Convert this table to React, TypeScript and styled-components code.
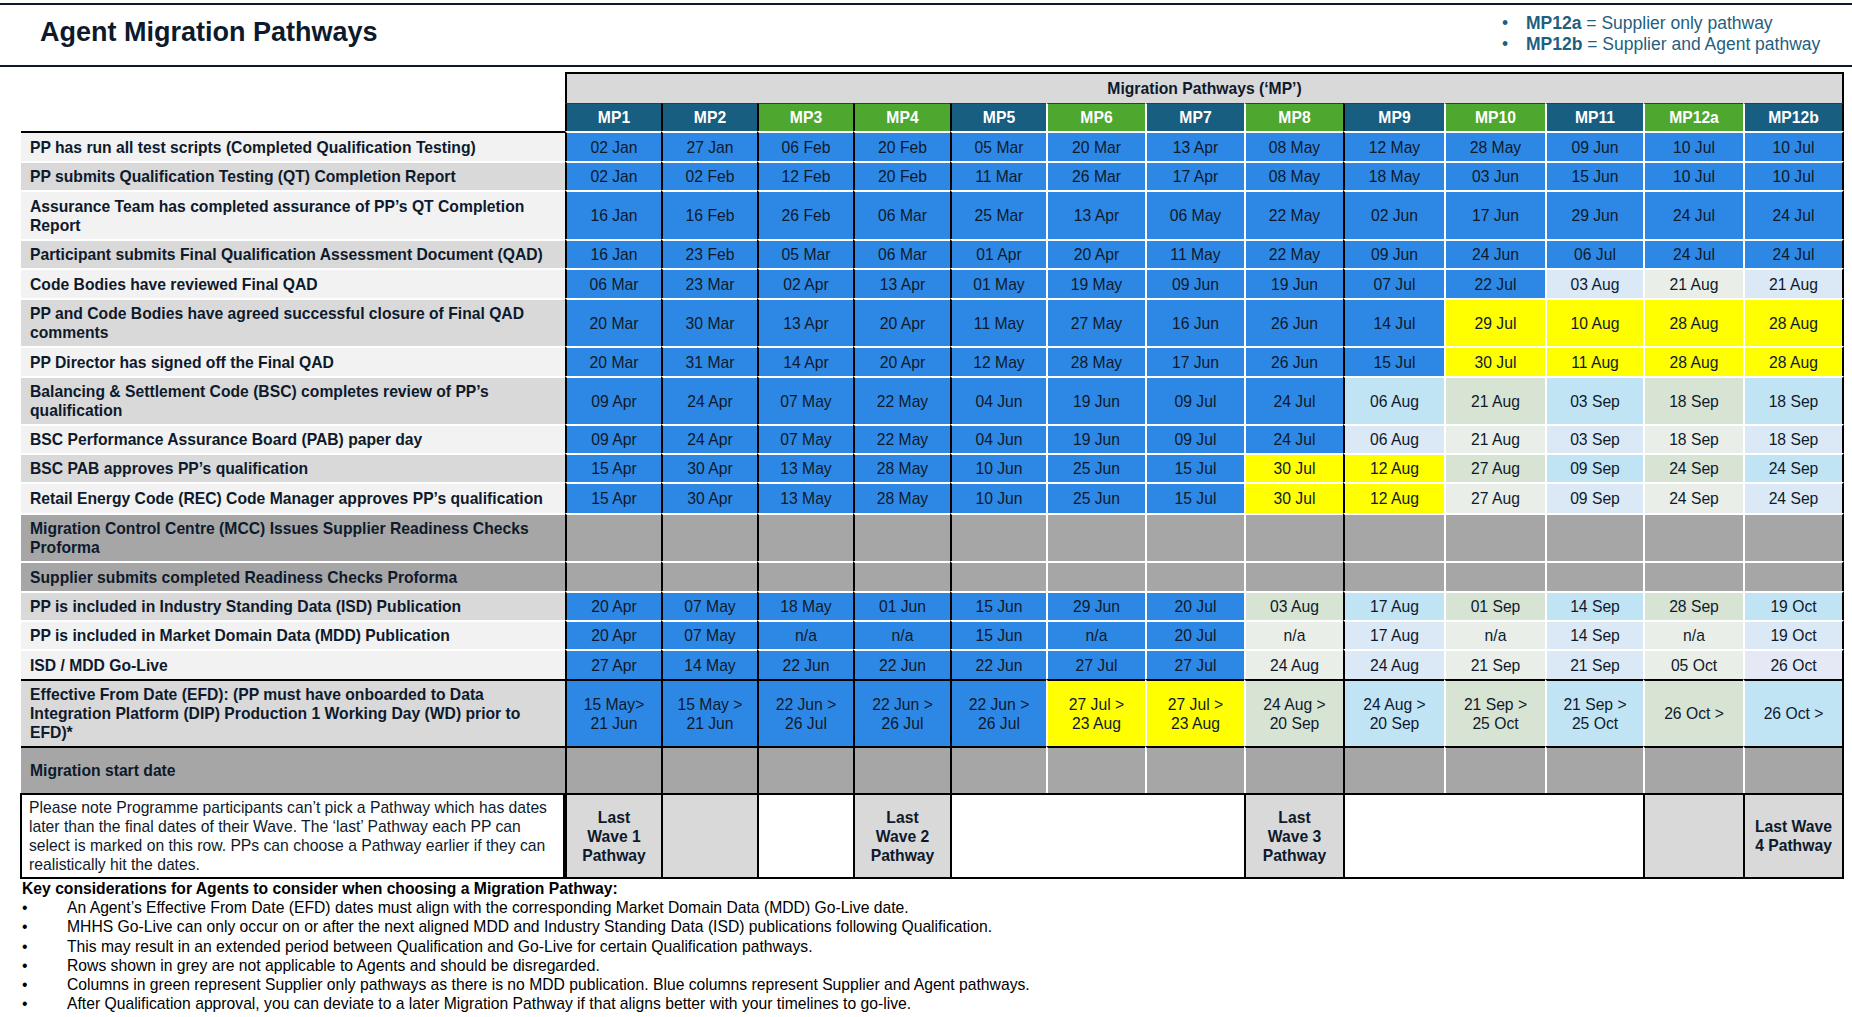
import React from "react";
import styled, { createGlobalStyle } from "styled-components";

const GlobalStyle = createGlobalStyle`
  *, *::before, *::after { box-sizing: border-box; }
  html, body { margin: 0; padding: 0; background: #ffffff; }
  body {
    font-family: "Liberation Sans", Arial, sans-serif;
    color: #0e1a2c;
  }
`;

const INK = "#0e1a2c";
const COLS = [96, 96, 96, 97, 96, 99, 99, 99, 101, 101, 98, 100, 101];
const BLACK_LEFT = [0, 1, 2, 3, 4, 8];

const TONES: Record<string, string> = {
  B: "#2d88e5",
  Y: "#ffff00",
  G: "#a6a6a6",
  l: "#dbe8f5",
  m: "#e9eee8",
  d: "#c1e4f5",
  s: "#d7e3d3",
  v: "#e5e8f5",
};

const HEADS = [
  { name: "MP1", green: false },
  { name: "MP2", green: false },
  { name: "MP3", green: true },
  { name: "MP4", green: true },
  { name: "MP5", green: false },
  { name: "MP6", green: true },
  { name: "MP7", green: false },
  { name: "MP8", green: true },
  { name: "MP9", green: false },
  { name: "MP10", green: true },
  { name: "MP11", green: false },
  { name: "MP12a", green: true },
  { name: "MP12b", green: false },
];

type Row = {
  label: string;
  shade: string;
  h: number;
  tones: string;
  dates: string[];
  heavy?: boolean;
};

const split = (s: string) => s.split("|");
const empty = () => Array(13).fill("");

const ROWS: Row[] = [
  {
    label: "PP has run all test scripts (Completed Qualification Testing)",
    shade: "#f2f2f2",
    h: 30,
    tones: "BBBBBBBBBBBBB",
    dates: split("02 Jan|27 Jan|06 Feb|20 Feb|05 Mar|20 Mar|13 Apr|08 May|12 May|28 May|09 Jun|10 Jul|10 Jul"),
  },
  {
    label: "PP submits Qualification Testing (QT) Completion Report",
    shade: "#d9d9d9",
    h: 29,
    tones: "BBBBBBBBBBBBB",
    dates: split("02 Jan|02 Feb|12 Feb|20 Feb|11 Mar|26 Mar|17 Apr|08 May|18 May|03 Jun|15 Jun|10 Jul|10 Jul"),
  },
  {
    label: "Assurance Team has completed assurance of PP’s QT Completion Report",
    shade: "#f2f2f2",
    h: 49,
    tones: "BBBBBBBBBBBBB",
    dates: split("16 Jan|16 Feb|26 Feb|06 Mar|25 Mar|13 Apr|06 May|22 May|02 Jun|17 Jun|29 Jun|24 Jul|24 Jul"),
  },
  {
    label: "Participant submits Final Qualification Assessment Document (QAD)",
    shade: "#d9d9d9",
    h: 29,
    tones: "BBBBBBBBBBBBB",
    dates: split("16 Jan|23 Feb|05 Mar|06 Mar|01 Apr|20 Apr|11 May|22 May|09 Jun|24 Jun|06 Jul|24 Jul|24 Jul"),
  },
  {
    label: "Code Bodies have reviewed Final QAD",
    shade: "#f2f2f2",
    h: 30,
    tones: "BBBBBBBBBBlml",
    dates: split("06 Mar|23 Mar|02 Apr|13 Apr|01 May|19 May|09 Jun|19 Jun|07 Jul|22 Jul|03 Aug|21 Aug|21 Aug"),
  },
  {
    label: "PP and Code Bodies have agreed successful closure of Final QAD comments",
    shade: "#d9d9d9",
    h: 48,
    tones: "BBBBBBBBBYYYY",
    dates: split("20 Mar|30 Mar|13 Apr|20 Apr|11 May|27 May|16 Jun|26 Jun|14 Jul|29 Jul|10 Aug|28 Aug|28 Aug"),
  },
  {
    label: "PP Director has signed off the Final QAD",
    shade: "#f2f2f2",
    h: 30,
    tones: "BBBBBBBBBYYYY",
    dates: split("20 Mar|31 Mar|14 Apr|20 Apr|12 May|28 May|17 Jun|26 Jun|15 Jul|30 Jul|11 Aug|28 Aug|28 Aug"),
  },
  {
    label: "Balancing & Settlement Code (BSC) completes review of PP’s qualification",
    shade: "#d9d9d9",
    h: 48,
    tones: "BBBBBBBBdsdsd",
    dates: split("09 Apr|24 Apr|07 May|22 May|04 Jun|19 Jun|09 Jul|24 Jul|06 Aug|21 Aug|03 Sep|18 Sep|18 Sep"),
  },
  {
    label: "BSC Performance Assurance Board (PAB) paper day",
    shade: "#f2f2f2",
    h: 29,
    tones: "BBBBBBBBlmlml",
    dates: split("09 Apr|24 Apr|07 May|22 May|04 Jun|19 Jun|09 Jul|24 Jul|06 Aug|21 Aug|03 Sep|18 Sep|18 Sep"),
  },
  {
    label: "BSC PAB approves PP’s qualification",
    shade: "#d9d9d9",
    h: 29,
    tones: "BBBBBBBYYsdsd",
    dates: split("15 Apr|30 Apr|13 May|28 May|10 Jun|25 Jun|15 Jul|30 Jul|12 Aug|27 Aug|09 Sep|24 Sep|24 Sep"),
  },
  {
    label: "Retail Energy Code (REC) Code Manager approves PP’s qualification",
    shade: "#f2f2f2",
    h: 31,
    tones: "BBBBBBBYYmlml",
    dates: split("15 Apr|30 Apr|13 May|28 May|10 Jun|25 Jun|15 Jul|30 Jul|12 Aug|27 Aug|09 Sep|24 Sep|24 Sep"),
  },
  {
    label: "Migration Control Centre (MCC) Issues Supplier Readiness Checks Proforma",
    shade: "#a6a6a6",
    h: 48,
    tones: "GGGGGGGGGGGGG",
    dates: empty(),
  },
  {
    label: "Supplier submits completed Readiness Checks Proforma",
    shade: "#a6a6a6",
    h: 30,
    tones: "GGGGGGGGGGGGG",
    dates: empty(),
  },
  {
    label: "PP is included in Industry Standing Data (ISD) Publication",
    shade: "#d9d9d9",
    h: 29,
    tones: "BBBBBBBsdsdsd",
    dates: split("20 Apr|07 May|18 May|01 Jun|15 Jun|29 Jun|20 Jul|03 Aug|17 Aug|01 Sep|14 Sep|28 Sep|19 Oct"),
  },
  {
    label: "PP is included in Market Domain Data (MDD) Publication",
    shade: "#f2f2f2",
    h: 29,
    tones: "BBBBBBBmlmlml",
    dates: split("20 Apr|07 May|n/a|n/a|15 Jun|n/a|20 Jul|n/a|17 Aug|n/a|14 Sep|n/a|19 Oct"),
  },
  {
    label: "ISD / MDD Go-Live",
    shade: "#f2f2f2",
    h: 30,
    tones: "BBBBBBBmlmlmv",
    dates: split("27 Apr|14 May|22 Jun|22 Jun|22 Jun|27 Jul|27 Jul|24 Aug|24 Aug|21 Sep|21 Sep|05 Oct|26 Oct"),
  },
  {
    label: "Effective From Date (EFD): (PP must have onboarded to Data Integration Platform (DIP) Production 1 Working Day (WD) prior to EFD)*",
    shade: "#d9d9d9",
    h: 67,
    tones: "BBBBBYYsdsdsd",
    heavy: true,
    dates: split(
      "15 May>\n21 Jun|15 May >\n21 Jun|22 Jun >\n26 Jul|22 Jun >\n26 Jul|22 Jun >\n26 Jul|27 Jul >\n23 Aug|27 Jul >\n23 Aug|24 Aug >\n20 Sep|24 Aug >\n20 Sep|21 Sep >\n25 Oct|21 Sep >\n25 Oct|26 Oct >|26 Oct >"
    ),
  },
  {
    label: "Migration start date",
    shade: "#a6a6a6",
    h: 47,
    tones: "GGGGGGGGGGGGG",
    heavy: true,
    dates: empty(),
  },
];

const WAVES = [
  { text: "Last\nWave 1\nPathway", bg: "#d9d9d9", span: 1 },
  { text: "", bg: "#d9d9d9", span: 1 },
  { text: "", bg: "#ffffff", span: 1 },
  { text: "Last\nWave 2\nPathway", bg: "#d9d9d9", span: 1 },
  { text: "", bg: "#ffffff", span: 3 },
  { text: "Last\nWave 3\nPathway", bg: "#d9d9d9", span: 1 },
  { text: "", bg: "#ffffff", span: 3 },
  { text: "", bg: "#d9d9d9", span: 1 },
  { text: "Last Wave\n4 Pathway", bg: "#d9d9d9", span: 1 },
];

const KEY_POINTS = [
  "An Agent’s Effective From Date (EFD) dates must align with the corresponding Market Domain Data (MDD) Go-Live date.",
  "MHHS Go-Live can only occur on or after the next aligned MDD and Industry Standing Data (ISD) publications following Qualification.",
  "This may result in an extended period between Qualification and Go-Live for certain Qualification pathways.",
  "Rows shown in grey are not applicable to Agents and should be disregarded.",
  "Columns in green represent Supplier only pathways as there is no MDD publication. Blue columns represent Supplier and Agent pathways.",
  "After Qualification approval, you can deviate to a later Migration Pathway if that aligns better with your timelines to go-live.",
];

const Page = styled.div`
  width: 1852px;
  height: 1017px;
  padding-top: 3px;
  overflow: hidden;
  background: #ffffff;
`;

const HeaderBar = styled.header`
  display: flex;
  align-items: center;
  height: 64px;
  border-top: 2px solid ${INK};
  border-bottom: 2px solid ${INK};
  padding-left: 40px;
`;

const Title = styled.h1`
  margin: 0;
  padding-bottom: 5px;
  font-size: 27px;
  font-weight: bold;
  color: #0c1a2b;
`;

const Legend = styled.ul`
  list-style: none;
  margin: 0 0 0 auto;
  padding: 0 0 3px 0;
  width: 350px;
  font-size: 17.5px;
  line-height: 21px;
  color: #1f5f80;
`;

const LegendItem = styled.li`
  display: flex;
`;

const Dot = styled.span<{ $w: number }>`
  flex: none;
  width: ${(p) => p.$w}px;
`;

const Grid = styled.div<{ $rows: string }>`
  display: grid;
  grid-template-columns: 544px ${COLS.map((w) => `${w}px`).join(" ")};
  grid-template-rows: ${(p) => p.$rows};
  margin: 5px 0 0 21px;
  font-size: 15.7px;
  line-height: 19px;
  color: ${INK};
`;

const Corner = styled.div`
  grid-row: span 2;
`;

const GroupHead = styled.div`
  grid-column: 2 / span 13;
  display: flex;
  align-items: center;
  justify-content: center;
  background: #d9d9d9;
  border: 2px solid #000;
  border-bottom: 0;
  font-weight: bold;
`;

const PathHead = styled.div<{ $bg: string; $line: string; $last: boolean }>`
  display: flex;
  align-items: center;
  justify-content: center;
  background: ${(p) => p.$bg};
  border-left: 2px solid ${(p) => p.$line};
  border-right: ${(p) => (p.$last ? "2px solid #000" : "0")};
  border-top: 1px solid #3a3a3a;
  color: #ffffff;
  font-weight: bold;
`;

const Label = styled.div<{ $bg: string; $top: string }>`
  display: flex;
  align-items: center;
  padding: 0 8px 0 9px;
  background: ${(p) => p.$bg};
  border-top: 2px solid ${(p) => p.$top};
  font-weight: bold;
`;

const Cell = styled.div<{ $bg: string; $left: string; $top: string; $last: boolean }>`
  display: flex;
  align-items: center;
  justify-content: center;
  text-align: center;
  white-space: pre-line;
  background: ${(p) => p.$bg};
  border-left: 2px solid ${(p) => p.$left};
  border-top: 2px solid ${(p) => p.$top};
  border-right: ${(p) => (p.$last ? "2px solid #000" : "0")};
`;

const NoteLabel = styled.div`
  display: flex;
  align-items: center;
  padding: 0 6px 0 7px;
  margin-left: -1px;
  background: #ffffff;
  border: 2px solid #000;
`;

const WaveCell = styled.div<{ $bg: string; $span: number; $last: boolean }>`
  grid-column: span ${(p) => p.$span};
  display: flex;
  align-items: center;
  justify-content: center;
  text-align: center;
  white-space: pre-line;
  background: ${(p) => p.$bg};
  border-top: 2px solid #000;
  border-bottom: 2px solid #000;
  border-left: 2px solid #000;
  border-right: ${(p) => (p.$last ? "2px solid #000" : "0")};
  font-weight: bold;
`;

const KeyBlock = styled.section`
  margin-left: 22px;
  font-size: 15.7px;
  line-height: 19.2px;
  color: #000;
`;

const KeyTitle = styled.div`
  font-weight: bold;
`;

const KeyItem = styled.div`
  display: flex;
`;

export default function App() {
  const rowSizes = ["31px", "28px", ...ROWS.map((r) => `${r.h}px`), "86px"].join(" ");

  return (
    <Page>
      <GlobalStyle />
      <HeaderBar>
        <Title>Agent Migration Pathways</Title>
        <Legend>
          <LegendItem>
            <Dot $w={24}>•</Dot>
            <span>
              <b>MP12a</b> = Supplier only pathway
            </span>
          </LegendItem>
          <LegendItem>
            <Dot $w={24}>•</Dot>
            <span>
              <b>MP12b</b> = Supplier and Agent pathway
            </span>
          </LegendItem>
        </Legend>
      </HeaderBar>

      <Grid $rows={rowSizes}>
        <Corner />
        <GroupHead>Migration Pathways (‘MP’)</GroupHead>
        {HEADS.map((h, i) => (
          <PathHead
            key={h.name}
            $bg={h.green ? "#4ea72e" : "#175e80"}
            $line={BLACK_LEFT.includes(i) ? "#000" : "#ffffff"}
            $last={i === 12}
          >
            {h.name}
          </PathHead>
        ))}

        {ROWS.map((r, ri) => (
          <React.Fragment key={r.label}>
            <Label $bg={r.shade} $top={ri === 0 || r.heavy ? "#000" : "#ffffff"}>
              {r.label}
            </Label>
            {r.dates.map((d, ci) => (
              <Cell
                key={ci}
                $bg={TONES[r.tones[ci]]}
                $left={BLACK_LEFT.includes(ci) ? "#000" : "#ffffff"}
                $top={r.heavy ? "#000" : "#ffffff"}
                $last={ci === 12}
              >
                {d}
              </Cell>
            ))}
          </React.Fragment>
        ))}

        <NoteLabel>
          Please note Programme participants can’t pick a Pathway which has dates later than the final dates of
          their Wave. The ‘last’ Pathway each PP can select is marked on this row. PPs can choose a Pathway
          earlier if they can realistically hit the dates.
        </NoteLabel>
        {WAVES.map((w, i) => (
          <WaveCell key={i} $bg={w.bg} $span={w.span} $last={i === WAVES.length - 1}>
            {w.text}
          </WaveCell>
        ))}
      </Grid>

      <KeyBlock>
        <KeyTitle>Key considerations for Agents to consider when choosing a Migration Pathway:</KeyTitle>
        {KEY_POINTS.map((k) => (
          <KeyItem key={k}>
            <Dot $w={45}>•</Dot>
            <span>{k}</span>
          </KeyItem>
        ))}
      </KeyBlock>
    </Page>
  );
}
